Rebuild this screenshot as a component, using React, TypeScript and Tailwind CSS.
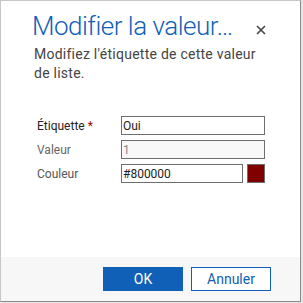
import React from "react";

export default function App() {
  return (
    <div className="w-[303px] h-[303px] bg-[#e6e6e6]" style={{ fontFamily: 'Roboto, "Open Sans", sans-serif' }}>
      <div className="w-[301px] h-[302px] bg-white border border-[#c6c6c6] border-r-[#8a8a8a] border-b-[#8a8a8a] flex flex-col">
        <div className="flex-1 flex flex-col">
          <div className="flex items-start pl-[31px] pr-[33px] pt-[7px]">
            <h1 className="flex-1 whitespace-nowrap text-[26px] leading-[36px] text-[#1160b7] font-light tracking-[-0.5px]">Modifier la valeur…</h1>
            <button className="mt-[16px] w-[12px] h-[12px] flex items-center justify-center">
              <svg width="10" height="10" viewBox="0 0 10 10">
                <path d="M1 1 L9 9 M9 1 L1 9" stroke="#444" strokeWidth="1.6" />
              </svg>
            </button>
          </div>
          <p className="pl-[33px] text-[14px] leading-[19px] text-[#444] mt-[1px] tracking-[0.25px]">
            Modifiez l'étiquette de cette valeur
            <br />
            de liste.
          </p>
          <div className="mt-[33px] pl-[36px] pr-[35px] flex flex-col gap-[5px] text-[12px]">
            <div className="flex items-center h-[19px]">
              <span className="w-[84px] text-[#222]">
                Étiquette <span className="text-[#a80000]">*</span>
              </span>
              <div className="flex-1 h-[19px] border border-[#6e6e6e] px-[1px] flex items-center text-[#222]">Oui</div>
            </div>
            <div className="flex items-center h-[19px]">
              <span className="w-[84px] text-[#666]">Valeur</span>
              <div className="flex-1 h-[19px] border border-[#6e6e6e] bg-[#f8f8f8] px-[1px] flex items-center text-[#888]">1</div>
            </div>
            <div className="flex items-center h-[19px]">
              <span className="w-[84px] text-[#555]">Couleur</span>
              <div className="flex-1 h-[19px] border border-[#6e6e6e] px-[1px] flex items-center text-[#222]">#800000</div>
              <div className="ml-[4px] w-[18px] h-[19px] border border-[#6e6e6e] bg-[#800000]" />
            </div>
          </div>
        </div>
        <div className="h-[44px] bg-[#f7f7f7] flex items-start justify-end gap-[8px] pr-[29px] pt-[10px]">
          <button className="w-[80px] h-[24px] bg-[#1160b7] text-white text-[14px] leading-none">OK</button>
          <button className="w-[80px] h-[24px] bg-white border border-[#1160b7] text-[#1160b7] text-[14px] leading-none">Annuler</button>
        </div>
      </div>
    </div>
  );
}
